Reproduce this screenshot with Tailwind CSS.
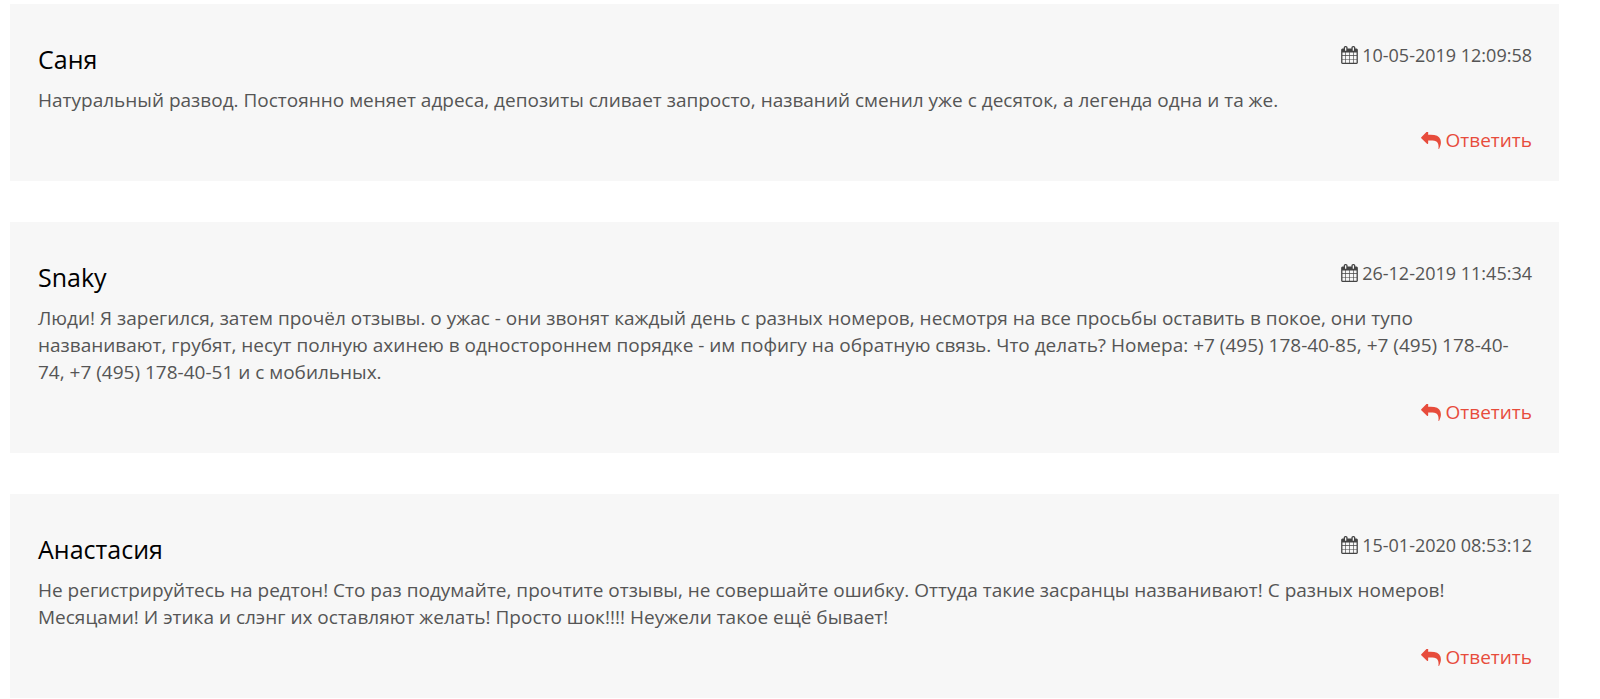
<!DOCTYPE html>
<html lang="ru">
<head>
<meta charset="utf-8">
<title>Отзывы</title>
<script src="https://cdn.jsdelivr.net/npm/@tailwindcss/browser@4"></script>
</head>
<body class="bg-white font-['Open_Sans',sans-serif] text-[19px] leading-[27px] text-[#555555]">
<svg class="hidden" aria-hidden="true">
  <symbol id="calendar" viewBox="64 0 1664 1792"><path d="M192 1664h288v-288h-288v288zm352 0h320v-288h-320v288zm-352-352h288v-320h-288v320zm352 0h320v-320h-320v320zm-352-384h288v-288h-288v288zm736 736h320v-288h-320v288zm-384-736h320v-288h-320v288zm768 736h288v-288h-288v288zm-384-352h320v-320h-320v320zm-352-864v-288q0-13-9.500-22.500t-22.500-9.500h-64q-13 0-22.500 9.500t-9.500 22.500v288q0 13 9.500 22.500t22.500 9.500h64q13 0 22.500-9.500t9.500-22.500zm736 864h288v-320h-288v320zm-384-384h320v-288h-320v288zm384 0h288v-288h-288v288zm32-480v-288q0-13-9.500-22.500t-22.500-9.500h-64q-13 0-22.500 9.500t-9.500 22.500v288q0 13 9.500 22.500t22.500 9.500h64q13 0 22.500-9.500t9.500-22.500zm384-64v1280q0 52-38 90t-90 38h-1408q-52 0-90-38t-38-90v-1280q0-52 38-90t90-38h128v-96q0-66 47-113t113-47h64q66 0 113 47t47 113v96h384v-96q0-66 47-113t113-47h64q66 0 113 47t47 113v96h128q52 0 90 38t38 90z"/></symbol>
  <symbol id="reply" viewBox="0 128 1792 1536"><path d="M1792 1120q0 166-127 451-3 7-10.500 24t-13.500 30-13 22q-12 17-28 17-15 0-23.500-10t-8.500-25q0-9 2.500-26.500t2.500-23.500q5-68 5-123 0-101-17.500-181t-48.500-138.500-80-101-105.500-69.500-133-42.500-154-21.500-175.500-6h-224v256q0 26-19 45t-45 19-45-19l-512-512q-19-19-19-45t19-45l512-512q19-19 45-19t45 19 19 45v256h224q713 0 875 403 53 134 53 333z"/></symbol>
</svg>
<main class="ml-[10px] mr-[41px] flex flex-col gap-[41px] pt-1">
  <article class="bg-[#f7f7f7] pr-[27px] pl-7 pt-[38px] pb-[27px]">
    <header class="flex items-start justify-between">
      <h2 class="pt-[3px] text-[25px] leading-[28px] text-black">Саня</h2>
      <time class="flex items-center gap-1 text-[18px] leading-[26px]" datetime="2019-05-10T12:09:58"><svg class="h-[18px] w-[17px] fill-[#444444]" aria-hidden="true"><use href="#calendar"/></svg>10-05-2019 12:09:58</time>
    </header>
    <p class="pt-[14px]">Натуральный развод. Постоянно меняет адреса, депозиты сливает запросто, названий сменил уже с десяток, а легенда одна и та же.</p>
    <div class="flex justify-end pt-[13px]">
      <a href="#" class="flex items-center gap-[5px] text-[#e74c3c]"><svg class="h-[17px] w-[20px] fill-current" aria-hidden="true"><use href="#reply"/></svg>Ответить</a>
    </div>
  </article>
  <article class="bg-[#f7f7f7] pr-[27px] pl-7 pt-[38px] pb-[27px]">
    <header class="flex items-start justify-between">
      <h2 class="pt-[3px] text-[25px] leading-[28px] text-black">Snaky</h2>
      <time class="flex items-center gap-1 text-[18px] leading-[26px]" datetime="2019-12-26T11:45:34"><svg class="h-[18px] w-[17px] fill-[#444444]" aria-hidden="true"><use href="#calendar"/></svg>26-12-2019 11:45:34</time>
    </header>
    <p class="pt-[14px]">Люди! Я зарегился, затем прочёл отзывы. о ужас - они звонят каждый день с разных номеров, несмотря на все просьбы оставить в покое, они тупо названивают, грубят, несут полную ахинею в одностороннем порядке - им пофигу на обратную связь. Что делать? Номера: +7 (495) 178-40-85, +7 (495) 178-40-74, +7 (495) 178-40-51 и с мобильных.</p>
    <div class="flex justify-end pt-[13px]">
      <a href="#" class="flex items-center gap-[5px] text-[#e74c3c]"><svg class="h-[17px] w-[20px] fill-current" aria-hidden="true"><use href="#reply"/></svg>Ответить</a>
    </div>
  </article>
  <article class="bg-[#f7f7f7] pr-[27px] pl-7 pt-[38px] pb-[27px]">
    <header class="flex items-start justify-between">
      <h2 class="pt-[3px] text-[25px] leading-[28px] text-black">Анастасия</h2>
      <time class="flex items-center gap-1 text-[18px] leading-[26px]" datetime="2020-01-15T08:53:12"><svg class="h-[18px] w-[17px] fill-[#444444]" aria-hidden="true"><use href="#calendar"/></svg>15-01-2020 08:53:12</time>
    </header>
    <p class="pt-[14px]">Не регистрируйтесь на редтон! Сто раз подумайте, прочтите отзывы, не совершайте ошибку. Оттуда такие засранцы названивают! С разных номеров! Месяцами! И этика и слэнг их оставляют желать! Просто шок!!!! Неужели такое ещё бывает!</p>
    <div class="flex justify-end pt-[13px]">
      <a href="#" class="flex items-center gap-[5px] text-[#e74c3c]"><svg class="h-[17px] w-[20px] fill-current" aria-hidden="true"><use href="#reply"/></svg>Ответить</a>
    </div>
  </article>
</main>
</body>
</html>
